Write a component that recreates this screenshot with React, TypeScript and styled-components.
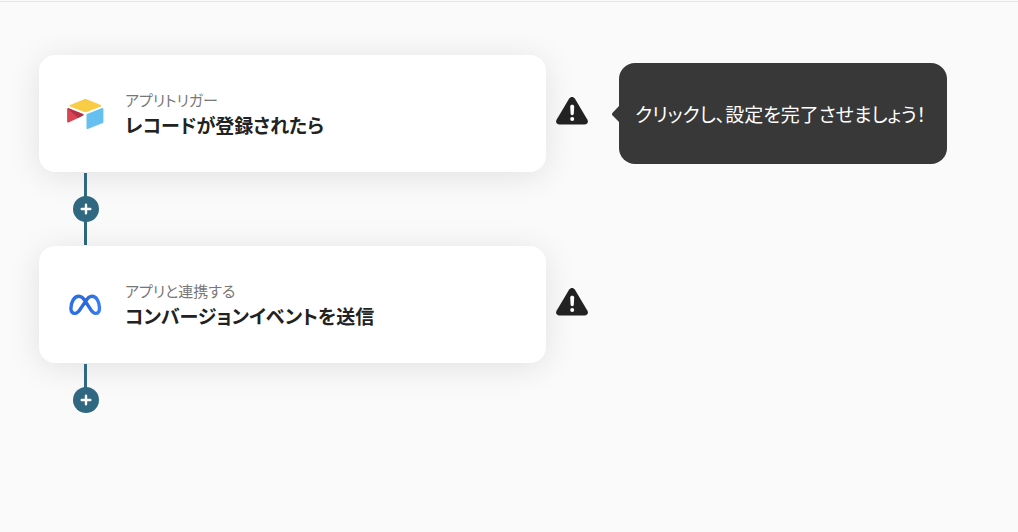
import React from "react";
import styled, { createGlobalStyle } from "styled-components";

const GlobalStyle = createGlobalStyle`
  *, *::before, *::after { box-sizing: border-box; }
  body {
    margin: 0;
    background: #fafafa;
    color: #222;
    font-family: "Noto Sans CJK JP", sans-serif;
    font-feature-settings: "palt";
  }
`;

const Page = styled.main`
  min-height: 100vh;
  border-top: 1px solid #fafafa;
  padding-bottom: 40px;
  background: #fafafa;

  &::before {
    content: "";
    display: block;
    height: 1px;
    background: #e3e4e4;
  }
`;

const Flow = styled.ol`
  list-style: none;
  margin: 0;
  padding: 53px 39px 0;
`;

const Step = styled.li`
  display: flex;
  flex-direction: column;
`;

const StepRow = styled.div`
  display: flex;
  align-items: center;
`;

const Card = styled.button`
  display: flex;
  align-items: center;
  gap: 21px;
  flex: 0 1 507px;
  min-width: 0;
  min-height: 117px;
  padding: 24px 28px;
  border: 0;
  border-radius: 16px;
  background: #fff;
  box-shadow: 0 4px 32px rgba(0, 0, 0, 0.1);
  color: inherit;
  font: inherit;
  font-feature-settings: inherit;
  text-align: left;
  cursor: pointer;

  > svg { flex: none; }
`;

const CardText = styled.span`
  display: flex;
  flex-direction: column;
`;

const Kind = styled.span`
  font-size: 15px;
  line-height: 22px;
  color: #777;
`;

const Title = styled.span`
  font-size: 19px;
  line-height: 28px;
  font-weight: 700;
`;

const WarningIcon = styled.svg`
  flex: none;
  margin: 0 31px 6px 10px;
`;

const Bubble = styled.div`
  position: relative;
  display: flex;
  align-items: center;
  min-width: 328px;
  min-height: 101px;
  padding: 0 16px;
  border-radius: 16px;
  background: #383838;
  color: #fff;
  font-size: 19px;
  line-height: 28px;
`;

const BubbleTail = styled.svg`
  position: absolute;
  right: 100%;
  top: calc(50% - 8px);
`;

const Connector = styled.div<{ $open?: boolean }>`
  display: flex;
  flex-direction: column;
  align-items: flex-start;
  height: 74px;
  margin-left: 34px;
  padding-top: 1px;

  &::before,
  &::after {
    content: "";
    width: 3px;
    height: 24px;
    margin-left: 11px;
    background: #2f6880;
  }

  &::after { display: ${({ $open }) => ($open ? "none" : "block")}; }
`;

const AddButton = styled.button`
  display: flex;
  flex: none;
  width: 26px;
  height: 26px;
  margin: -1px 0;
  padding: 0;
  border: 0;
  border-radius: 50%;
  background: #2f6880;
  cursor: pointer;
`;

function AirtableLogo() {
  return (
    <svg width="37" height="30" viewBox="0 0 37 30" aria-hidden="true">
      <path fill="#f8cd45" d="M16.7.4 3.1 6c-.8.3-.8 1.2 0 1.5l13.5 5.3c1.2.5 2.5.5 3.7 0L33.8 7.5c.8-.3.8-1.2 0-1.5L20.2.4c-1.1-.5-2.4-.5-3.5 0z" />
      <path fill="#65bfef" d="M19.5 15.8v13.4c0 .6.6 1 1.2.8l15.1-5.9c.4-.1.6-.5.6-.8V9.900c0-.6-.6-1-1.200-.8L20 15c-.3.1-.5.5-.5.8z" />
      <path fill="#dc4353" d="m16 16.500-4.900 2.400-9.600 4.600c-.6.3-1.400-.1-1.400-.8V10.100c0-.4.2-.6.5-.7.3-.2.6-.2.9-.1L15.900 15c.8.3.8 1.2.1 1.500z" />
      <path fill="#b13446" d="m16 16.500-4.900 2.400L.5 9.500c.3-.3.7-.3 1-.2L15.900 15c.8.3.8 1.2.1 1.500z" />
    </svg>
  );
}

function MetaLogo() {
  return (
    <svg width="37" height="24" viewBox="0 0 37 24" fill="none" aria-hidden="true">
      <defs>
        <linearGradient id="metaBase" x1="3" y1="0" x2="34" y2="0" gradientUnits="userSpaceOnUse">
          <stop offset="0" stopColor="#2e72e8" />
          <stop offset="0.5" stopColor="#2b67da" />
          <stop offset="1" stopColor="#3b82f4" />
        </linearGradient>
      </defs>
      <path
        d="M18.500 8.500C20.500 5 22.600 3.300 25.100 3.300c4.600 0 7.400 5.800 7.400 12 0 3.200-1.300 5.100-3.700 5.100-2.300 0-3.800-1.500-6.200-5.500l-4.100-6.400C16.400 5 14.300 3.300 11.800 3.300c-4.600 0-7.900 5.800-7.900 12 0 3.200 1.500 5.100 4 5.100 2.200 0 3.800-1.500 6.200-5.500z"
        stroke="url(#metaBase)"
        strokeWidth="3.4"
        strokeLinejoin="round"
      />
    </svg>
  );
}

function Warning() {
  return (
    <WarningIcon width="32" height="30" viewBox="0 0 32 30" role="img" aria-label="未設定">
      <path fill="#222" d="M13.200 2.600c1.300-2.100 4.300-2.100 5.600 0L31.300 23.500c1.400 2.500.2 5-2.800 5h-25c-3 0-4.200-2.500-2.800-5z" />
      <path fill="#fff" d="M14.200 10.600c0-2.400 4-2.400 4 0l-.4 7.200c-.1 1.800-3.100 1.800-3.200 0z" />
      <circle cx="16.2" cy="23" r="2" fill="#fff" />
    </WarningIcon>
  );
}

function AddStep({ open }: { open?: boolean }) {
  return (
    <Connector $open={open}>
      <AddButton type="button" aria-label="ステップを追加">
        <svg width="26" height="26" viewBox="0 0 26 26" aria-hidden="true">
          <path d="M13 8.700v8.600M8.700 13h8.600" stroke="#fff" strokeWidth="2.4" strokeLinecap="round" />
        </svg>
      </AddButton>
    </Connector>
  );
}

interface StepData {
  kind: string;
  title: string;
  logo: React.ReactNode;
  hint?: string;
}

const steps: StepData[] = [
  {
    kind: "アプリトリガー",
    title: "レコードが登録されたら",
    logo: <AirtableLogo />,
    hint: "クリックし、設定を完了させましょう！",
  },
  { kind: "アプリと連携する", title: "コンバージョンイベントを送信", logo: <MetaLogo /> },
];

export default function App() {
  return (
    <>
      <GlobalStyle />
      <Page>
        <Flow>
          {steps.map((step, index) => (
            <Step key={step.title}>
              <StepRow>
                <Card type="button">
                  {step.logo}
                  <CardText>
                    <Kind>{step.kind}</Kind>
                    <Title>{step.title}</Title>
                  </CardText>
                </Card>
                <Warning />
                {step.hint && (
                  <Bubble role="tooltip">
                    <BubbleTail width="8" height="16" viewBox="0 0 8 16" aria-hidden="true">
                      <path fill="#383838" d="M8 0v16L1.600 9.500c-.8-.8-.8-2 0-2.800z" />
                    </BubbleTail>
                    {step.hint}
                  </Bubble>
                )}
              </StepRow>
              <AddStep open={index === steps.length - 1} />
            </Step>
          ))}
        </Flow>
      </Page>
    </>
  );
}
